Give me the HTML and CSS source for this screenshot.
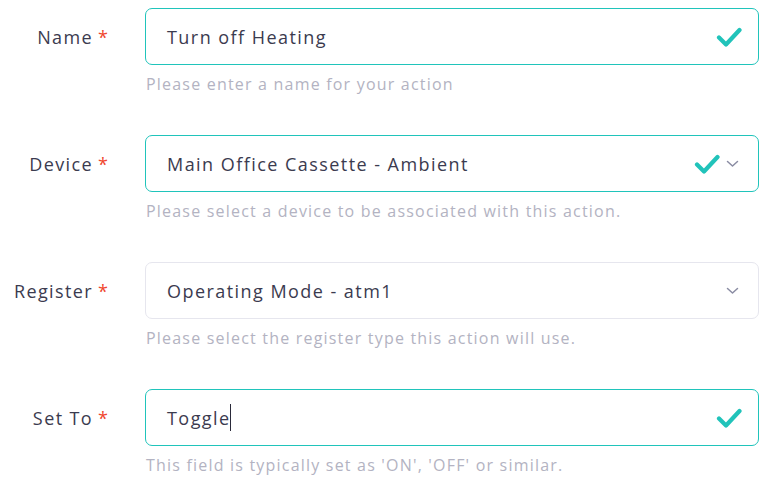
FILE: index.html
```html
<!DOCTYPE html>
<html lang="en">
<head>
<meta charset="utf-8">
<title>Action form</title>
<link rel="stylesheet" href="styles.css">
</head>
<body>
<form class="form">
  <div class="row">
    <label class="label"><span class="label-text">Name</span><span class="req">*</span></label>
    <div class="control">
      <div class="input valid">
        <span class="value">Turn off Heating</span>
        <span class="icons">
          <svg class="check" width="26" height="22" viewBox="0 0 26 22"><polyline points="3,11.5 10,18.5 23.5,4" fill="none" stroke="#21c3ba" stroke-width="4.2" stroke-linecap="round" stroke-linejoin="round"/></svg>
        </span>
      </div>
      <p class="help">Please enter a name for your action</p>
    </div>
  </div>
  <div class="row">
    <label class="label"><span class="label-text">Device</span><span class="req">*</span></label>
    <div class="control">
      <div class="input valid">
        <span class="value">Main Office Cassette - Ambient</span>
        <span class="icons">
          <svg class="check" width="26" height="22" viewBox="0 0 26 22"><polyline points="3,11.5 10,18.5 23.5,4" fill="none" stroke="#21c3ba" stroke-width="4.2" stroke-linecap="round" stroke-linejoin="round"/></svg>
          <svg class="chev" width="13" height="8" viewBox="0 0 13 8"><polyline points="1.5,1.5 6.5,6 11.5,1.5" fill="none" stroke="#8a8ca3" stroke-width="1.5" stroke-linecap="round" stroke-linejoin="round"/></svg>
        </span>
      </div>
      <p class="help">Please select a device to be associated with this action.</p>
    </div>
  </div>
  <div class="row">
    <label class="label"><span class="label-text">Register</span><span class="req">*</span></label>
    <div class="control">
      <div class="input">
        <span class="value">Operating Mode - atm1</span>
        <span class="icons">
          <svg class="chev" width="13" height="8" viewBox="0 0 13 8"><polyline points="1.5,1.5 6.5,6 11.5,1.5" fill="none" stroke="#8a8ca3" stroke-width="1.5" stroke-linecap="round" stroke-linejoin="round"/></svg>
        </span>
      </div>
      <p class="help">Please select the register type this action will use.</p>
    </div>
  </div>
  <div class="row">
    <label class="label"><span class="label-text">Set To</span><span class="req">*</span></label>
    <div class="control">
      <div class="input valid">
        <span class="value">Toggle<span class="caret"></span></span>
        <span class="icons">
          <svg class="check" width="26" height="22" viewBox="0 0 26 22"><polyline points="3,11.5 10,18.5 23.5,4" fill="none" stroke="#21c3ba" stroke-width="4.2" stroke-linecap="round" stroke-linejoin="round"/></svg>
        </span>
      </div>
      <p class="help">This field is typically set as 'ON', 'OFF' or similar.</p>
    </div>
  </div>
</form>
</body>
</html>
```
FILE: styles.css
```css
html, body {
  margin: 0;
  padding: 0;
  background: #ffffff;
}

body {
  font-family: "Open Sans", "Liberation Sans", sans-serif;
  color: #3b3b4f;
}

.form {
  padding-top: 8px;
}

.row {
  display: grid;
  grid-template-columns: 108px 614px;
  column-gap: 37px;
  margin-bottom: 39px;
}

.row:last-child {
  margin-bottom: 0;
}

.label {
  height: 57px;
  display: flex;
  align-items: center;
  justify-content: flex-end;
  font-size: 18px;
  color: #3b3b4f;
  white-space: nowrap;
}

.label-text {
  letter-spacing: 1.4px;
}

.req {
  color: #f0462d;
  margin-left: 5px;
}

.input {
  box-sizing: border-box;
  height: 57px;
  border: 1px solid #e6e6ee;
  border-radius: 7px;
  display: flex;
  align-items: center;
  justify-content: space-between;
  padding: 0 16px 0 21px;
  font-size: 18px;
  color: #3b3b4f;
}

.input.valid {
  border-color: #20c4bb;
}

.value {
  display: flex;
  align-items: center;
  letter-spacing: 1.45px;
}

.caret {
  display: inline-block;
  width: 1px;
  height: 27px;
  background: #2a2a3a;
  margin-left: -1px;
}

.icons {
  display: flex;
  align-items: center;
  gap: 6px;
}

.check {
  display: block;
}

.chev {
  display: block;
  margin-right: 3px;
}

.help {
  margin: 7px 0 0 1px;
  line-height: 24px;
  font-size: 16px;
  letter-spacing: 1.2px;
  color: #b3b3c2;
}
```
